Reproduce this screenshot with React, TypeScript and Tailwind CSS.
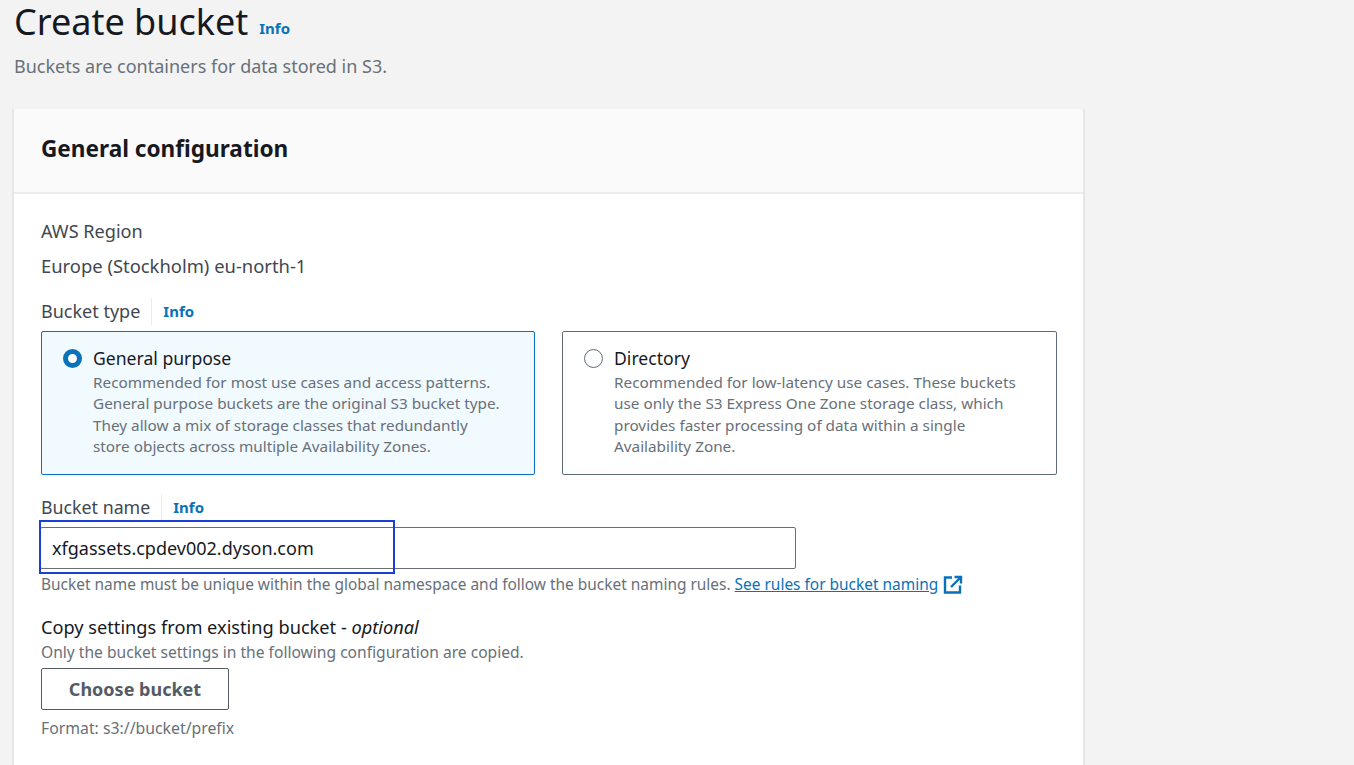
import React from 'react'

const font = { fontFamily: '"Noto Sans", sans-serif' }

const InfoLink = ({ className = '' }: { className?: string }) => (
  <span className={`font-bold text-[15px] leading-[20px] text-[#0972b8] ${className}`}>Info</span>
)

type RadioCardProps = {
  title: string
  lines: string[]
  selected?: boolean
  className?: string
}

const RadioCard = ({ title, lines, selected, className = '' }: RadioCardProps) => (
  <div
    className={`h-[144px] rounded-[2px] border pl-[21px] pt-[15px] flex gap-[11px] ${className} ${
      selected ? 'border-[#0972b8] bg-[#f1faff]' : 'border-[#5f6b7a] bg-white'
    }`}
  >
    {selected ? (
      <div className="mt-[2px] w-[19px] h-[19px] rounded-full border-[5px] border-[#0972b8] bg-white shrink-0" />
    ) : (
      <div className="mt-[2px] w-[19px] h-[19px] rounded-full border border-[#5f6b7a] bg-white shrink-0" />
    )}
    <div className="min-w-0">
      <div className="text-[17.6px] leading-[22px] text-[#16191f]">{title}</div>
      <div className="mt-[3px] text-[15.3px] leading-[21.4px] text-[#687078] whitespace-nowrap">
        {lines.map((line) => (
          <div key={line}>{line}</div>
        ))}
      </div>
    </div>
  </div>
)

const App = () => {
  return (
    <div className="w-[1354px] h-[765px] overflow-hidden bg-[#f3f3f3] pl-[14px]" style={font}>
      <div className="h-[44px] flex items-end gap-[11px]">
        <h1 className="text-[36px] leading-[44px] text-[#16191f]">Create bucket</h1>
        <InfoLink className="mb-[6px]" />
      </div>
      <p className="mt-[10px] text-[18px] leading-[24px] text-[#687078]">Buckets are containers for data stored in S3.</p>

      <section className="mt-[31px] -ml-[2px] w-[1073px] h-[700px] bg-white border-x-2 border-[#e4e6e8]">
        <div className="h-[85px] bg-[#fafafa] border-b-2 border-[#eaeded] pl-[27px] pt-[24px]">
          <h2 className="text-[22.6px] leading-[32px] font-bold text-[#16191f]">General configuration</h2>
        </div>

        <div className="pl-[27px] pt-[25px]">
          <div className="text-[18.1px] leading-[24px] text-[#414750]">AWS Region</div>
          <div className="mt-[11px] text-[18.4px] leading-[24px] text-[#414750]">Europe (Stockholm) eu-north-1</div>

          <div className="mt-[17px] h-[32px] flex items-center">
            <span className="text-[18px] leading-[24px] text-[#414750]">Bucket type</span>
            <span className="ml-[11px] mr-[11px] w-px h-[27px] bg-[#e9ebed]" />
            <InfoLink />
          </div>

          <div className="mt-[4px] flex gap-[27px]">
            <RadioCard
              selected
              className="w-[494px]"
              title="General purpose"
              lines={[
                'Recommended for most use cases and access patterns.',
                'General purpose buckets are the original S3 bucket type.',
                'They allow a mix of storage classes that redundantly',
                'store objects across multiple Availability Zones.',
              ]}
            />
            <RadioCard
              className="w-[495px]"
              title="Directory"
              lines={[
                'Recommended for low-latency use cases. These buckets',
                'use only the S3 Express One Zone storage class, which',
                'provides faster processing of data within a single',
                'Availability Zone.',
              ]}
            />
          </div>

          <div className="mt-[16px] h-[32px] flex items-center">
            <span className="text-[17.8px] leading-[24px] text-[#414750]">Bucket name</span>
            <span className="ml-[11px] mr-[11px] w-px h-[27px] bg-[#e9ebed]" />
            <InfoLink />
          </div>

          <div className="relative mt-[4px] -ml-px w-[756px] h-[42px] rounded-[2px] border border-[#6b6f75] bg-white pl-[11px] flex items-center">
            <span className="text-[18px] text-[#16191f]">xfgassets.cpdev002.dyson.com</span>
            <div className="absolute left-[-2px] top-[-8px] w-[356px] h-[54px] border-[2.5px] border-[#1a3fd6]" />
          </div>

          <div className="mt-[5px] h-[22px] flex items-center text-[15.45px] text-[#687078] whitespace-nowrap">
            <span>Bucket name must be unique within the global namespace and follow the bucket naming rules.</span>
            <span className="ml-[4px] text-[#0972b8] underline">See rules for bucket naming </span>
            <svg className="ml-[5px]" width="20" height="20" viewBox="0 0 20 20" fill="none" stroke="#0972b8" strokeWidth="2.4">
              <path d="M9 2.5H2v15h15v-7" />
              <path d="M8 12 17.5 2.5M11.5 2h6.5v6.5" />
            </svg>
          </div>

          <div className="mt-[19px] text-[18.2px] leading-[24px] text-[#16191f]">
            Copy settings from existing bucket - <em>optional</em>
          </div>
          <div className="mt-[3px] text-[15.6px] leading-[20px] text-[#687078]">Only the bucket settings in the following configuration are copied.</div>

          <button className="mt-[6px] block w-[188px] h-[42px] rounded-[2px] border border-[#545b64] bg-white text-[18px] font-bold text-[#545b64]">
            Choose bucket
          </button>
          <div className="mt-[8px] text-[15.8px] leading-[20px] text-[#687078]">Format: s3://bucket/prefix</div>
        </div>
      </section>
    </div>
  )
}

export default App
